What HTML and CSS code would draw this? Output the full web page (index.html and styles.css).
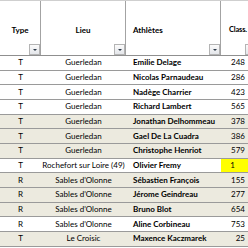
FILE: index.html
```
<!DOCTYPE html>
<html>
<head>
<meta charset="utf-8">
<link rel="stylesheet" href="styles.css">
</head>
<body>
<div class="sheet">
  <div class="head">
    <div class="hc center"><span>Type</span><i class="dd"></i></div>
    <div class="hc center"><span>Lieu</span><i class="dd"></i></div>
    <div class="hc left"><span>Athlètes</span><i class="dd"></i></div>
    <div class="hc left class"><span>Class.</span><i class="dd"></i></div>
  </div>
  <div class="row"><span class="c">T</span><span class="c">Guerledan</span><span class="n">Emilie Delage</span><span class="r">248</span></div>
  <div class="row"><span class="c">T</span><span class="c">Guerledan</span><span class="n">Nicolas Parnaudeau</span><span class="r">286</span></div>
  <div class="row"><span class="c">T</span><span class="c">Guerledan</span><span class="n">Nadège Charrier</span><span class="r">423</span></div>
  <div class="row"><span class="c">T</span><span class="c">Guerledan</span><span class="n">Richard Lambert</span><span class="r">565</span></div>
  <div class="row tan"><span class="c">T</span><span class="c">Guerledan</span><span class="n">Jonathan Delhommeau</span><span class="r">378</span></div>
  <div class="row tan"><span class="c">T</span><span class="c">Guerledan</span><span class="n">Gael De La Cuadra</span><span class="r">386</span></div>
  <div class="row tan"><span class="c">T</span><span class="c">Guerledan</span><span class="n">Christophe Henriot</span><span class="r">579</span></div>
  <div class="row"><span class="c">T</span><span class="c">Rochefort sur Loire (49)</span><span class="n">Olivier Fremy</span><span class="r hl">1</span></div>
  <div class="row tan"><span class="c">R</span><span class="c">Sables d'Olonne</span><span class="n">Sébastien François</span><span class="r">155</span></div>
  <div class="row tan"><span class="c">R</span><span class="c">Sables d'Olonne</span><span class="n">Jérome Geindreau</span><span class="r">277</span></div>
  <div class="row tan"><span class="c">R</span><span class="c">Sables d'Olonne</span><span class="n">Bruno Blot</span><span class="r">654</span></div>
  <div class="row"><span class="c">R</span><span class="c">Sables d'Olonne</span><span class="n">Aline Corbineau</span><span class="r">753</span></div>
  <div class="row tan"><span class="c">T</span><span class="c">Le Croisic</span><span class="n">Maxence Kaczmarek</span><span class="r">25</span></div>
</div>
</body>
</html>
```
FILE: styles.css
```
html, body {
  margin: 0;
  padding: 0;
  overflow: hidden;
  background: #ffffff;
}
.sheet {
  width: 248px;
  overflow: hidden;
  font-family: Lato, "Liberation Sans", sans-serif;
  font-size: 8px;
  color: #000;
}
.head, .row {
  display: grid;
  grid-template-columns: 41px 85px 95px 41px;
}
.head {
  height: 56px;
  box-sizing: border-box;
  border-top: 1px solid #cfcfcf;
  border-bottom: 1px solid #8f8f8f;
}
.hc {
  position: relative;
  display: flex;
  align-items: center;
  border-right: 1px solid #a3a3a3;
  font-weight: bold;
  padding-top: 3px;
}
.hc.center { justify-content: center; }
.hc.left { padding-left: 7px; }
.hc.class { padding-left: 8px; font-size: 7.5px; letter-spacing: -0.2px; }
.dd {
  position: absolute;
  right: 0;
  bottom: 0;
  width: 11px;
  height: 11px;
  box-sizing: border-box;
  border: 1px solid #b4b4b4;
  background: linear-gradient(#fbfbfb, #e4e6ea);
}
.dd::after {
  content: "";
  position: absolute;
  left: 3px;
  top: 4px;
  border-left: 2px solid transparent;
  border-right: 2px solid transparent;
  border-top: 2px solid #2d3a4a;
}
.class .dd { right: auto; left: 24px; }
.row {
  height: 14.67px;
  box-sizing: border-box;
  border-bottom: 1px solid #9a9a9a;
  align-items: center;
  white-space: nowrap;
}
.row.tan { background: #eceadf; }
.row span { overflow: hidden; line-height: 13px; }
.c { text-align: center; }
.n { font-weight: bold; padding-left: 7px; }
.r { text-align: right; padding-right: 17px; }
.r.hl { background: #ffff00; height: 100%; display: flex; align-items: center; justify-content: flex-end; padding-right: 27px; }
```
